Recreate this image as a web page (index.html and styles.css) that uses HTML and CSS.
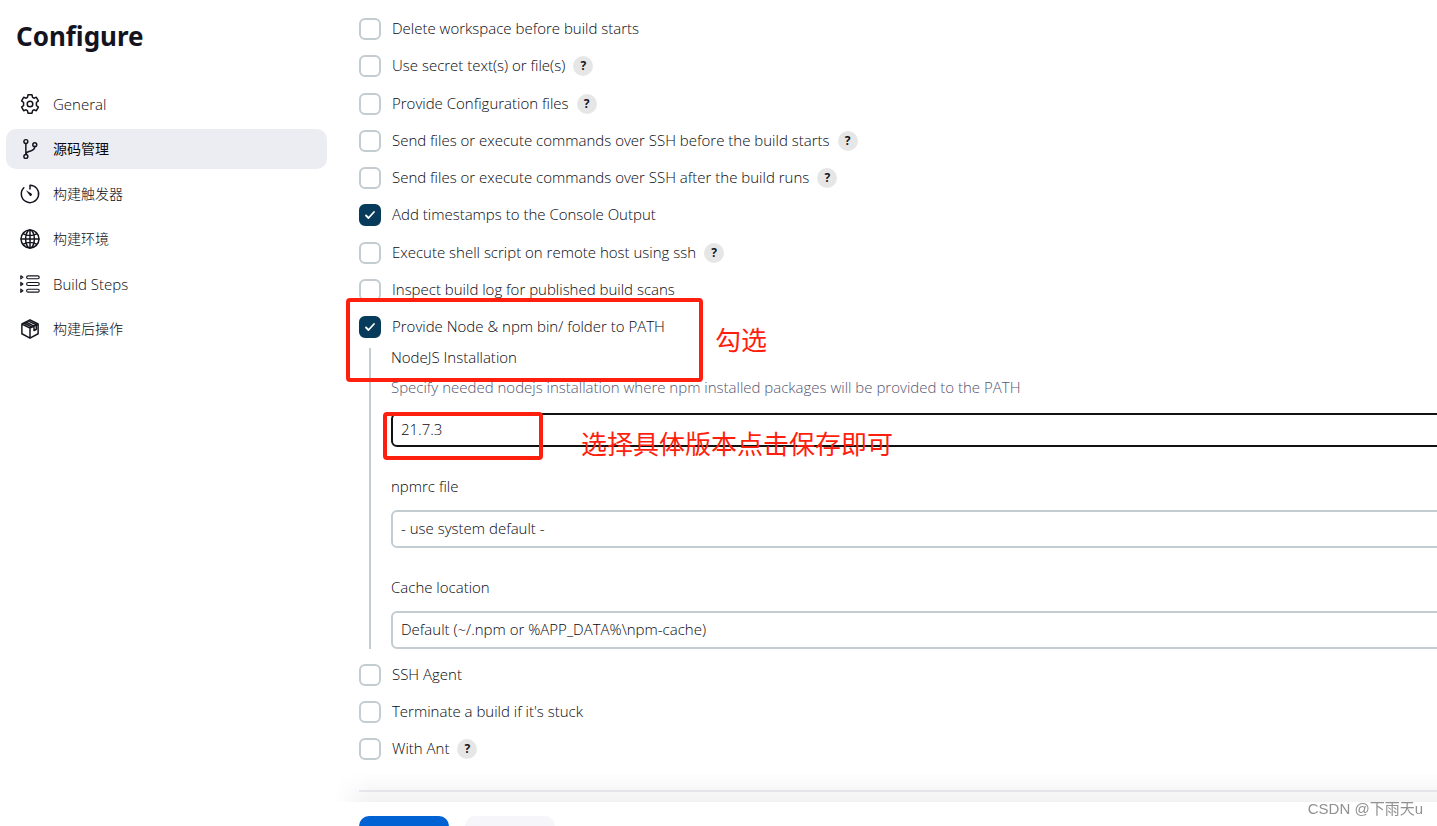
FILE: index.html
```html
<!DOCTYPE html>
<html lang="en">
<head>
<meta charset="utf-8">
<title>Configure</title>
<link rel="stylesheet" href="styles.css">
</head>
<body>
<div class="page">
  <aside class="sidebar">
    <h1 class="title">Configure</h1>
    <nav class="tasks">
      <a class="task" href="#general">
        <svg class="icon" viewBox="0 0 512 512"><circle cx="256" cy="256" r="72"/><path d="M204 22h104l13 66 34 20 64-23 52 90-51 44v74l51 44-52 90-64-23-34 20-13 66H204l-13-66-34-20-64 23-52-90 51-44v-74l-51-44 52-90 64 23 34-20z"/></svg>
        <span>General</span>
      </a>
      <a class="task task-active" href="#scm">
        <svg class="icon" viewBox="0 0 512 512"><circle cx="150" cy="66" r="50"/><circle cx="150" cy="446" r="50"/><circle cx="378" cy="144" r="50"/><path d="M150 116v280M378 194c0 92-60 100-120 118-60 18-108 28-108 84"/></svg>
        <span lang="zh">源码管理</span>
      </a>
      <a class="task" href="#triggers">
        <svg class="icon" viewBox="0 0 512 512"><path d="M98 98a222 222 0 1 0 158-66v96"/><path d="M150 160l134 78a34 34 0 1 1-44 46z" class="solid"/></svg>
        <span lang="zh">构建触发器</span>
      </a>
      <a class="task" href="#environment">
        <svg class="icon" viewBox="0 0 512 512"><circle cx="256" cy="256" r="230"/><ellipse cx="256" cy="256" rx="112" ry="230"/><path d="M256 26v460M26 256h460M90 126c90 58 242 58 332 0M90 386c90-58 242-58 332 0"/></svg>
        <span lang="zh">构建环境</span>
      </a>
      <a class="task" href="#steps">
        <svg class="icon icon-list" viewBox="0 0 512 512"><rect x="170" y="46" width="322" height="76" rx="38"/><rect x="170" y="218" width="322" height="76" rx="38"/><rect x="170" y="390" width="322" height="76" rx="38"/><path d="M20 44l54 40-54 40zM20 216l54 40-54 40zM20 388l54 40-54 40z"/></svg>
        <span>Build Steps</span>
      </a>
      <a class="task" href="#post">
        <svg class="icon" viewBox="0 0 512 512"><path d="M256 22l208 106v250L256 492 48 378V128zM48 128l208 104 208-104M256 232v260M150 76l208 108v112l60-34V152L212 46M100 102l208 106"/></svg>
        <span lang="zh">构建后操作</span>
      </a>
    </nav>
  </aside>

  <main class="content">
    <div class="option"><input class="check" type="checkbox" id="o1"><label for="o1">Delete workspace before build starts</label></div>
    <div class="option"><input class="check" type="checkbox" id="o2"><label for="o2">Use secret text(s) or file(s)</label><button class="help" type="button">?</button></div>
    <div class="option"><input class="check" type="checkbox" id="o3"><label for="o3">Provide Configuration files</label><button class="help" type="button">?</button></div>
    <div class="option"><input class="check" type="checkbox" id="o4"><label for="o4">Send files or execute commands over SSH before the build starts</label><button class="help" type="button">?</button></div>
    <div class="option"><input class="check" type="checkbox" id="o5"><label for="o5">Send files or execute commands over SSH after the build runs</label><button class="help" type="button">?</button></div>
    <div class="option"><input class="check" type="checkbox" id="o6" checked><label for="o6">Add timestamps to the Console Output</label></div>
    <div class="option"><input class="check" type="checkbox" id="o7"><label for="o7">Execute shell script on remote host using ssh</label><button class="help" type="button">?</button></div>
    <div class="option"><input class="check" type="checkbox" id="o8"><label for="o8">Inspect build log for published build scans</label></div>
    <div class="option option-open"><input class="check" type="checkbox" id="o9" checked><label for="o9">Provide Node &amp; npm bin/ folder to PATH</label></div>
    <div class="nested">
      <div class="field">
        <label for="node">NodeJS Installation</label>
        <p class="hint">Specify needed nodejs installation where npm installed packages will be provided to the PATH</p>
        <select class="select select-focus" id="node"><option>21.7.3</option></select>
      </div>
      <div class="field">
        <label for="npmrc">npmrc file</label>
        <select class="select" id="npmrc"><option>- use system default -</option></select>
      </div>
      <div class="field">
        <label for="cache">Cache location</label>
        <select class="select" id="cache"><option>Default (~/.npm or %APP_DATA%\npm-cache)</option></select>
      </div>
    </div>
    <div class="option"><input class="check" type="checkbox" id="o10"><label for="o10">SSH Agent</label></div>
    <div class="option"><input class="check" type="checkbox" id="o11"><label for="o11">Terminate a build if it's stuck</label></div>
    <div class="option"><input class="check" type="checkbox" id="o12"><label for="o12">With Ant</label><button class="help" type="button">?</button></div>
    <hr class="divider">
  </main>
</div>

<div class="bottom-bar">
  <button class="btn btn-primary" type="button" aria-label="Save"></button>
  <button class="btn" type="button" aria-label="Apply"></button>
</div>

<div class="mark mark-option"></div>
<div class="mark mark-version"></div>
<div class="note note-option">勾选</div>
<div class="note note-version">选择具体版本点击保存即可</div>
<div class="watermark">CSDN @下雨天u</div>
</body>
</html>
```
FILE: styles.css
```css
* {
  box-sizing: border-box;
}

body {
  margin: 0;
  height: 100vh;
  overflow: hidden;
  background: #fff;
  color: #08080f;
  font: 300 15px/20px "Open Sans", "Noto Sans CJK SC", sans-serif;
}

.page {
  display: flex;
}

.sidebar {
  flex: 0 0 333px;
  padding: 18px 6px;
}

.title {
  margin: 0 0 30px;
  padding-left: 10px;
  color: #14141f;
  font: 700 26px/36px "Noto Sans", sans-serif;
}

.tasks {
  display: flex;
  flex-direction: column;
  gap: 5px;
}

.task {
  display: flex;
  align-items: center;
  gap: 13px;
  height: 40px;
  padding: 0 14px;
  border-radius: 10px;
  color: inherit;
  text-decoration: none;
}

.task :lang(zh) {
  font-size: 14px;
}

.task-active {
  background: #ecedf3;
  font-weight: 400;
}

.icon {
  width: 20px;
  height: 20px;
  fill: none;
  stroke: #14141f;
  stroke-width: 38;
  stroke-linejoin: round;
  stroke-linecap: round;
  overflow: visible;
}

.icon-list {
  stroke-width: 30;
}

.icon .solid {
  fill: #14141f;
  stroke: none;
}

.content {
  flex: 1;
  min-width: 0;
  padding: 18px 0 0 26px;
}

.option {
  display: flex;
  align-items: center;
  height: 22px;
  margin-bottom: 15px;
  white-space: nowrap;
}

.option:nth-of-type(4n + 2) {
  margin-bottom: 16px;
}

.option-open {
  margin-bottom: 10px;
}

.content label,
.hint {
  padding-bottom: 2px;
  line-height: 18px;
}

.check {
  appearance: none;
  width: 22px;
  height: 22px;
  margin: 0 11px 0 0;
  border: 2px solid #c3ccd1;
  border-radius: 6px;
  background: #fff;
}

.check:checked {
  border-color: #073b5c;
  background: #073b5c url("data:image/svg+xml,%3Csvg xmlns='http://www.w3.org/2000/svg' viewBox='0 0 18 18'%3E%3Cpath d='M5 9.500l2.500 2.500 5.500-6' fill='none' stroke='%23fff' stroke-width='1.800' stroke-linecap='round' stroke-linejoin='round'/%3E%3C/svg%3E") center / 18px 18px no-repeat;
}

.help {
  width: 20px;
  height: 20px;
  margin-left: 8px;
  padding: 0;
  border: 0;
  border-radius: 50%;
  background: #e6e6e6;
  color: #14141f;
  font: 700 12px/20px "Noto Sans", sans-serif;
}

.nested {
  display: flex;
  flex-direction: column;
  gap: 30px;
  margin: 0 -20px 15px 10px;
  padding-left: 20px;
  border-left: 2px solid #c3ccd1;
}

.field {
  display: flex;
  flex-direction: column;
}

.hint {
  margin: 10px 0 2px;
  color: #55556f;
}

.select {
  appearance: none;
  height: 38px;
  margin-top: 13px;
  padding: 0 8px 2px;
  border: 2px solid #c3ccd1;
  border-radius: 6px;
  background: #fff;
  color: inherit;
  font: inherit;
}

.select-focus {
  height: 34px;
  border-color: #111;
}

.divider {
  height: 2px;
  margin: 30px 0 0;
  border: 0;
  background: #ecedf3;
}

.bottom-bar {
  position: fixed;
  left: 335px;
  right: 0;
  bottom: 0;
  display: flex;
  gap: 16px;
  height: 24px;
  padding: 14px 24px 0;
  background: #fff;
}

.bottom-bar::before {
  content: "";
  position: absolute;
  left: 0;
  right: 0;
  bottom: 100%;
  height: 30px;
  background: linear-gradient(to top, rgba(0, 0, 0, 0.05), transparent);
  mask-image: linear-gradient(to right, transparent, #000 36px);
}

.btn {
  width: 90px;
  height: 36px;
  border: 0;
  border-radius: 10px;
  background: #f6f6fa;
}

.btn-primary {
  background: #0062d3;
}

.mark {
  position: absolute;
  border: 4px solid #ff1f0f;
  border-radius: 4px;
}

.mark-option {
  left: 346px;
  top: 298px;
  width: 357px;
  height: 84px;
}

.mark-version {
  left: 383px;
  top: 412px;
  width: 160px;
  height: 48px;
}

.note {
  position: absolute;
  color: #ff1f0f;
  font: 26px/36px "Noto Sans CJK SC", sans-serif;
  white-space: nowrap;
}

.note-option {
  left: 715px;
  top: 321px;
}

.note-version {
  left: 581px;
  top: 425px;
}

.watermark {
  position: fixed;
  right: 14px;
  bottom: 7px;
  color: #919193;
  font: 15px/20px "Liberation Sans", "Noto Sans CJK SC", sans-serif;
}
```
